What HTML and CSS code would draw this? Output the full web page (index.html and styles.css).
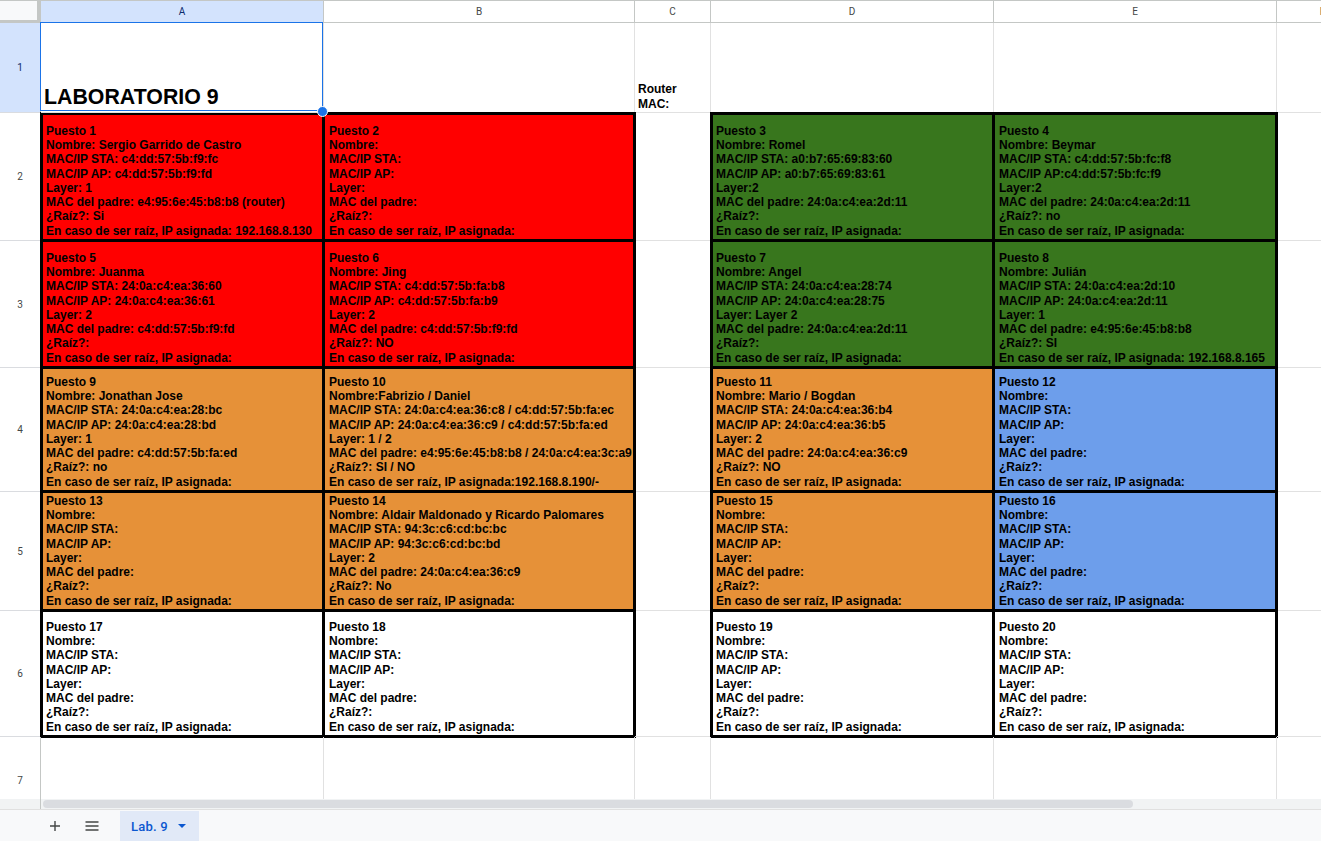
FILE: index.html
```html
<!DOCTYPE html>
<html lang="es">
<head>
<meta charset="utf-8">
<title>Lab. 9</title>
<link rel="stylesheet" href="styles.css">
</head>
<body>
<div class="sheet">
  <div class="grid">
    <!-- header row -->
    <div class="corner"></div>
    <div class="hd hd-sel">A</div>
    <div class="hd">B</div>
    <div class="hd">C</div>
    <div class="hd">D</div>
    <div class="hd">E</div>
    <div class="hd">F</div>

    <!-- row 1 -->
    <div class="rh rh-sel">1</div>
    <div class="c title-cell"><div>LABORATORIO 9</div><div class="sel"></div><div class="handle"></div></div>
    <div class="c"></div>
    <div class="c router"><div>Router<br>MAC:</div></div>
    <div class="c"></div>
    <div class="c"></div>
    <div class="c"></div>

    <!-- row 2 -->
    <div class="rh">2</div>
    <div class="c p bl bt red"><div>Puesto 1<br>Nombre: Sergio Garrido de Castro<br>MAC/IP STA: c4:dd:57:5b:f9:fc<br>MAC/IP AP: c4:dd:57:5b:f9:fd<br>Layer: 1<br>MAC del padre: e4:95:6e:45:b8:b8 (router)<br>¿Raíz?: Si<br>En caso de ser raíz, IP asignada: 192.168.8.130</div></div>
    <div class="c p bt red"><div>Puesto 2<br>Nombre:<br>MAC/IP STA:<br>MAC/IP AP:<br>Layer:<br>MAC del padre:<br>¿Raíz?:<br>En caso de ser raíz, IP asignada:</div></div>
    <div class="c"></div>
    <div class="c p bl bt green"><div>Puesto 3<br>Nombre: Romel<br>MAC/IP STA: a0:b7:65:69:83:60<br>MAC/IP AP: a0:b7:65:69:83:61<br>Layer:2<br>MAC del padre: 24:0a:c4:ea:2d:11<br>¿Raíz?:<br>En caso de ser raíz, IP asignada:</div></div>
    <div class="c p bt green"><div>Puesto 4<br>Nombre: Beymar<br>MAC/IP STA: c4:dd:57:5b:fc:f8<br>MAC/IP AP:c4:dd:57:5b:fc:f9<br>Layer:2<br>MAC del padre: 24:0a:c4:ea:2d:11<br>¿Raíz?: no<br>En caso de ser raíz, IP asignada:</div></div>
    <div class="c"></div>

    <!-- row 3 -->
    <div class="rh">3</div>
    <div class="c p bl red"><div>Puesto 5<br>Nombre: Juanma<br>MAC/IP STA: 24:0a:c4:ea:36:60<br>MAC/IP AP: 24:0a:c4:ea:36:61<br>Layer: 2<br>MAC del padre: c4:dd:57:5b:f9:fd<br>¿Raíz?:<br>En caso de ser raíz, IP asignada:</div></div>
    <div class="c p red"><div>Puesto 6<br>Nombre: Jing<br>MAC/IP STA: c4:dd:57:5b:fa:b8<br>MAC/IP AP: c4:dd:57:5b:fa:b9<br>Layer: 2<br>MAC del padre: c4:dd:57:5b:f9:fd<br>¿Raíz?: NO<br>En caso de ser raíz, IP asignada:</div></div>
    <div class="c"></div>
    <div class="c p bl green"><div>Puesto 7<br>Nombre: Angel<br>MAC/IP STA: 24:0a:c4:ea:28:74<br>MAC/IP AP: 24:0a:c4:ea:28:75<br>Layer: Layer 2<br>MAC del padre: 24:0a:c4:ea:2d:11<br>¿Raíz?:<br>En caso de ser raíz, IP asignada:</div></div>
    <div class="c p green"><div>Puesto 8<br>Nombre: Julián<br>MAC/IP STA: 24:0a:c4:ea:2d:10<br>MAC/IP AP: 24:0a:c4:ea:2d:11<br>Layer: 1<br>MAC del padre: e4:95:6e:45:b8:b8<br>¿Raíz?: SI<br>En caso de ser raíz, IP asignada: 192.168.8.165</div></div>
    <div class="c"></div>

    <!-- row 4 -->
    <div class="rh">4</div>
    <div class="c p bl orange"><div>Puesto 9<br>Nombre: Jonathan Jose<br>MAC/IP STA: 24:0a:c4:ea:28:bc<br>MAC/IP AP: 24:0a:c4:ea:28:bd<br>Layer: 1<br>MAC del padre: c4:dd:57:5b:fa:ed<br>¿Raíz?: no<br>En caso de ser raíz, IP asignada:</div></div>
    <div class="c p orange"><div>Puesto 10<br>Nombre:Fabrizio / Daniel<br>MAC/IP STA: 24:0a:c4:ea:36:c8 / c4:dd:57:5b:fa:ec<br>MAC/IP AP: 24:0a:c4:ea:36:c9 / c4:dd:57:5b:fa:ed<br>Layer: 1 / 2<br>MAC del padre: e4:95:6e:45:b8:b8 / 24:0a:c4:ea:3c:a9<br>¿Raíz?: SI / NO<br>En caso de ser raíz, IP asignada:192.168.8.190/-</div></div>
    <div class="c"></div>
    <div class="c p bl orange"><div>Puesto 11<br>Nombre: Mario / Bogdan<br>MAC/IP STA: 24:0a:c4:ea:36:b4<br>MAC/IP AP: 24:0a:c4:ea:36:b5<br>Layer: 2<br>MAC del padre: 24:0a:c4:ea:36:c9<br>¿Raíz?: NO<br>En caso de ser raíz, IP asignada:</div></div>
    <div class="c p blue"><div>Puesto 12<br>Nombre:<br>MAC/IP STA:<br>MAC/IP AP:<br>Layer:<br>MAC del padre:<br>¿Raíz?:<br>En caso de ser raíz, IP asignada:</div></div>
    <div class="c"></div>

    <!-- row 5 -->
    <div class="rh">5</div>
    <div class="c p bl orange"><div>Puesto 13<br>Nombre:<br>MAC/IP STA:<br>MAC/IP AP:<br>Layer:<br>MAC del padre:<br>¿Raíz?:<br>En caso de ser raíz, IP asignada:</div></div>
    <div class="c p orange"><div>Puesto 14<br>Nombre: Aldair Maldonado y Ricardo Palomares<br>MAC/IP STA: 94:3c:c6:cd:bc:bc<br>MAC/IP AP: 94:3c:c6:cd:bc:bd<br>Layer: 2<br>MAC del padre: 24:0a:c4:ea:36:c9<br>¿Raíz?: No<br>En caso de ser raíz, IP asignada:</div></div>
    <div class="c"></div>
    <div class="c p bl orange"><div>Puesto 15<br>Nombre:<br>MAC/IP STA:<br>MAC/IP AP:<br>Layer:<br>MAC del padre:<br>¿Raíz?:<br>En caso de ser raíz, IP asignada:</div></div>
    <div class="c p blue"><div>Puesto 16<br>Nombre:<br>MAC/IP STA:<br>MAC/IP AP:<br>Layer:<br>MAC del padre:<br>¿Raíz?:<br>En caso de ser raíz, IP asignada:</div></div>
    <div class="c"></div>

    <!-- row 6 -->
    <div class="rh">6</div>
    <div class="c p bl white"><div>Puesto 17<br>Nombre:<br>MAC/IP STA:<br>MAC/IP AP:<br>Layer:<br>MAC del padre:<br>¿Raíz?:<br>En caso de ser raíz, IP asignada:</div></div>
    <div class="c p white"><div>Puesto 18<br>Nombre:<br>MAC/IP STA:<br>MAC/IP AP:<br>Layer:<br>MAC del padre:<br>¿Raíz?:<br>En caso de ser raíz, IP asignada:</div></div>
    <div class="c"></div>
    <div class="c p bl white"><div>Puesto 19<br>Nombre:<br>MAC/IP STA:<br>MAC/IP AP:<br>Layer:<br>MAC del padre:<br>¿Raíz?:<br>En caso de ser raíz, IP asignada:</div></div>
    <div class="c p white"><div>Puesto 20<br>Nombre:<br>MAC/IP STA:<br>MAC/IP AP:<br>Layer:<br>MAC del padre:<br>¿Raíz?:<br>En caso de ser raíz, IP asignada:</div></div>
    <div class="c"></div>

    <!-- row 7 -->
    <div class="rh">7</div>
    <div class="c"></div>
    <div class="c"></div>
    <div class="c"></div>
    <div class="c"></div>
    <div class="c"></div>
    <div class="c"></div>
  </div>
</div>

<div class="hscroll">
  <div class="hs-left"></div>
  <div class="thumb"></div>
</div>

<div class="tabs">
  <div class="tbtn">
    <svg width="12" height="12" viewBox="0 0 12 12"><path d="M6 1v10M1 6h10" stroke="#444746" stroke-width="1.4" fill="none"/></svg>
  </div>
  <div class="tbtn menu">
    <svg width="14" height="10" viewBox="0 0 14 10"><path d="M0.5 1h13M0.5 5h13M0.5 9h13" stroke="#444746" stroke-width="1.4" fill="none"/></svg>
  </div>
  <div class="tab">
    <span class="tab-name">Lab. 9</span>
    <svg class="caret" width="8" height="4" viewBox="0 0 8 4"><path d="M0 0h8L4 4z" fill="#0b57d0"/></svg>
  </div>
</div>
</body>
</html>
```

FILE: styles.css
```css
* { box-sizing: border-box; }

html, body {
  margin: 0;
  padding: 0;
}

body {
  width: 1321px;
  height: 841px;
  overflow: hidden;
  background: #fff;
  font-family: "Liberation Sans", Arial, sans-serif;
  display: flex;
  flex-direction: column;
}

.sheet {
  flex: none;
  height: 799px;
  overflow: hidden;
  background: #fff;
}

.grid {
  display: grid;
  grid-template-columns: 41px 283px 311px 76px 283px 283px 92px;
  grid-template-rows: 23px 90px 128px 127px 124px 119px 126px 88px;
  width: 1369px;
}

/* headers */
.corner {
  background: #f8f9fa;
  border-top: 1px solid #c4c7c5;
  border-right: 4px solid #c4c7c5;
  border-bottom: 3px solid #c4c7c5;
}

.hd {
  display: flex;
  align-items: center;
  justify-content: center;
  background: #fff;
  border-top: 1px solid #c4c7c5;
  border-right: 1px solid #c4c7c5;
  border-bottom: 1px solid #c4c7c5;
  font-family: Roboto, "Liberation Sans", sans-serif;
  font-size: 10px;
  color: #444746;
}

.rh {
  display: flex;
  align-items: center;
  justify-content: center;
  background: #fff;
  border-right: 1px solid #c4c7c5;
  border-bottom: 1px solid #dadce0;
  font-family: Roboto, "Liberation Sans", sans-serif;
  font-size: 10px;
  color: #444746;
}

.hd-sel, .rh-sel {
  background: #d3e3fd;
  color: #0b2c6b;
}

/* cells */
.c {
  display: flex;
  align-items: flex-end;
  overflow: hidden;
  white-space: nowrap;
  border-right: 1px solid #e1e1e1;
  border-bottom: 1px solid #e1e1e1;
  padding: 0 0 2px 5px;
  font-size: 12px;
  font-weight: bold;
  line-height: 14.3px;
  color: #000;
}

.p {
  border-right-color: #000;
  border-bottom-color: #000;
  outline: 1px solid #000;
  box-shadow: inset 1px 1px 0 #000, inset -1px -1px 0 #000;
}

.bl {
  border-left: 1px solid #000;
  padding-left: 4px;
}

.bt {
  border-top: 1px solid #000;
}

.red { background: #ff0000; }
.green { background: #38761d; }
.orange { background: #e69138; }
.blue { background: #6d9eeb; }
.white { background: #fff; }

.title-cell {
  position: relative;
  overflow: visible;
  padding: 0 0 2px 3px;
  font-size: 21.33px;
  line-height: 1.15;
}

.router {
  padding: 0 0 0 3px;
  line-height: 15px;
}

.sel {
  position: absolute;
  left: -1px;
  top: -1px;
  right: 0;
  bottom: 1px;
  border: 1px solid #1a73e8;
  pointer-events: none;
}

.handle {
  position: absolute;
  right: -5px;
  bottom: -5px;
  width: 11px;
  height: 11px;
  border-radius: 50%;
  background: #1a73e8;
  border: 1px solid #fff;
}

/* horizontal scrollbar */
.hscroll {
  flex: none;
  height: 11px;
  display: flex;
  background: #f1f3f4;
  border-bottom: 1px solid #e0e0e0;
}

.hs-left {
  width: 41px;
  border-right: 1px solid #c4c7c5;
}

.thumb {
  margin: 1px 0 0 2px;
  width: 1090px;
  height: 8px;
  border-radius: 4px;
  background: #dadce0;
}

/* sheet tabs */
.tabs {
  flex: none;
  height: 31px;
  display: flex;
  align-items: stretch;
  background: #f8f9fa;
  padding-left: 43px;
}

.tbtn {
  width: 24px;
  display: flex;
  align-items: center;
  justify-content: center;
}

.tbtn.menu {
  margin-left: 13px;
}

.tab {
  margin-left: 16px;
  width: 79px;
  background: #e1e9f7;
  display: flex;
  align-items: center;
  padding-left: 11px;
  margin-top: 1px;
}

.tab-name {
  font-family: Roboto, "Liberation Sans", sans-serif;
  font-weight: 500;
  font-size: 13px;
  color: #0b57d0;
  letter-spacing: 0.2px;
}

.caret {
  margin-left: 10px;
}
```
